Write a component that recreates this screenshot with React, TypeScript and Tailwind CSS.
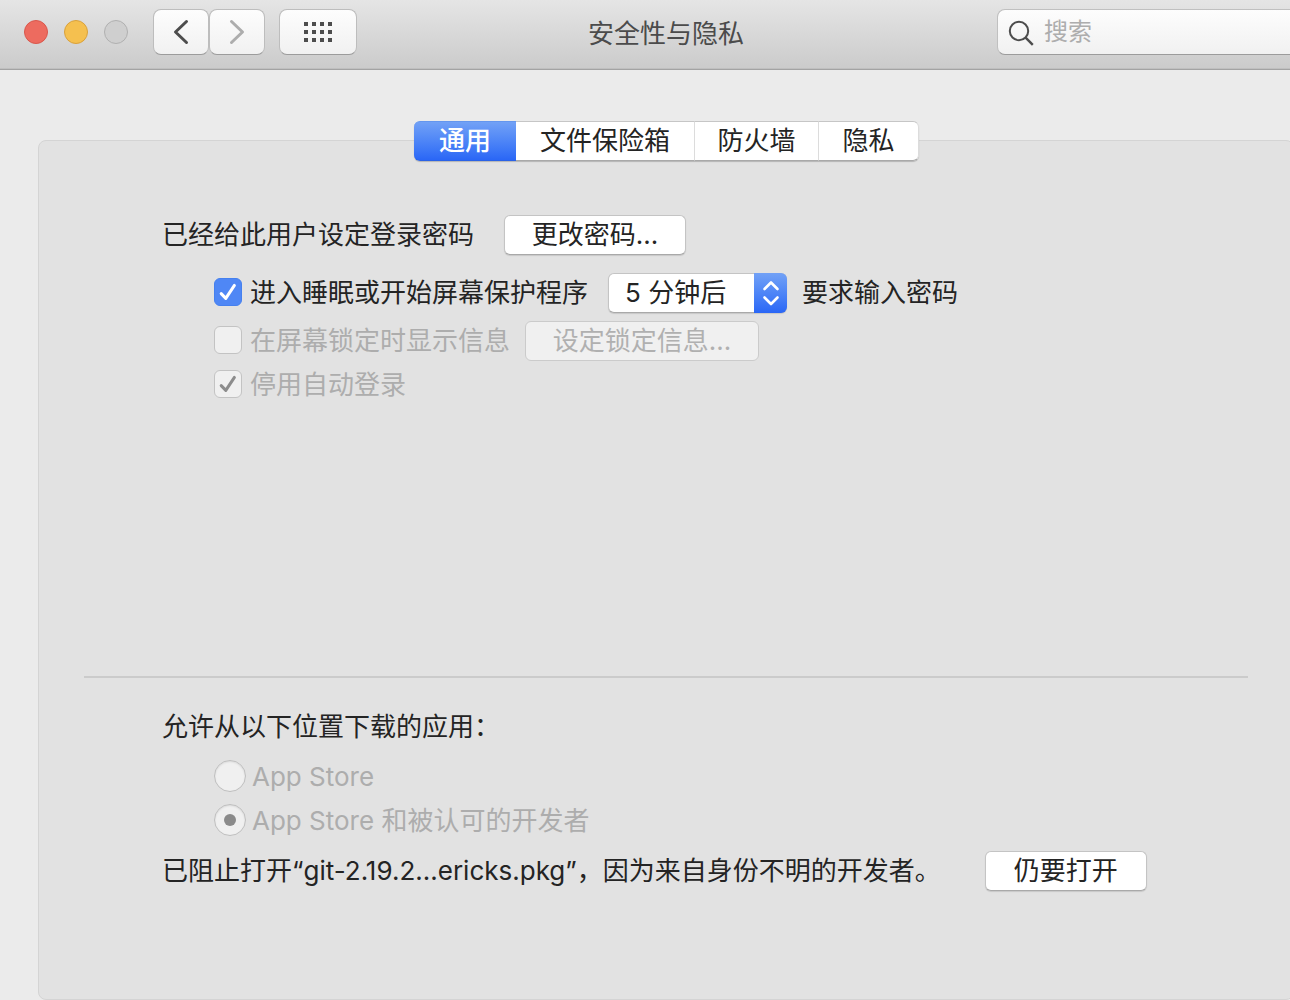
import React, { useState } from "react";

const buttonBase =
    "h-10 rounded-md border bg-white border-[#c4c4c4] border-b-[#a9a9a9] shadow-[0_1px_1px_rgba(0,0,0,0.12)] text-center leading-[38px] disabled:bg-[#f0f0f0] disabled:border-[#cbcbcb] disabled:text-[#b0b0b0] disabled:shadow-none";

const toolButton =
    "flex h-[46px] items-center justify-center rounded-lg border border-[#bdbdbd] border-b-[#9c9c9c] bg-linear-to-b from-[#fdfdfd] to-[#f1f1f1]";

const tabs = [
    { name: "通用", width: "w-[102px]" },
    { name: "文件保险箱", width: "w-[179px]" },
    { name: "防火墙", width: "w-[124px]" },
    { name: "隐私", width: "w-[100px]" },
];

interface CheckboxProps {
    id: string;
    checked: boolean;
    disabled?: boolean;
    onChange?: () => void;
}

const Checkbox: React.FC<CheckboxProps> = ({ id, checked, disabled, onChange }) => (
    <span className="mb-[2px] grid size-7 shrink-0">
        <input
            id={id}
            type="checkbox"
            checked={checked}
            disabled={disabled}
            onChange={onChange}
            className="col-start-1 row-start-1 size-7 appearance-none rounded-md border border-[#bcbcbc] bg-white checked:border-[#4580ef] checked:bg-[#4f87f5] disabled:border-[#c3c3c3] disabled:bg-[#f0f0f0]"
        />
        {checked && (
            <svg
                viewBox="0 0 28 28"
                fill="none"
                strokeLinecap="round"
                strokeLinejoin="round"
                className={`pointer-events-none col-start-1 row-start-1 size-7 ${disabled ? "stroke-[#8c8c8c]" : "stroke-white"}`}
            >
                <path d="M7.2 15.6 11.8 20.4 20.4 7.4" strokeWidth="3" />
            </svg>
        )}
    </span>
);

interface RadioProps {
    id: string;
    label: string;
    checked?: boolean;
}

const Radio: React.FC<RadioProps> = ({ id, label, checked }) => (
    <div className="flex h-11 items-center gap-[6px] text-[#adadad]">
        <span className="grid size-8 shrink-0 place-items-center">
            <input
                id={id}
                type="radio"
                name="source"
                defaultChecked={checked}
                disabled
                className="col-start-1 row-start-1 size-8 appearance-none rounded-full border border-[#bfbfbf] bg-[#f0f0f0] shadow-[inset_0_1px_2px_rgba(0,0,0,0.1)]"
            />
            {checked && <span className="col-start-1 row-start-1 size-3 rounded-full bg-[#8b8b8b]" />}
        </span>
        <label htmlFor={id} className="pt-[2px]">{label}</label>
    </div>
);

const Toolbar: React.FC = () => (
    <header className="grid h-[70px] grid-cols-[1fr_auto_1fr] items-start border-b border-[#a3a3a3] bg-linear-to-b from-[#e5e5e5] to-[#cbcbcb] px-6 pt-[9px] shadow-[inset_0_-1px_0_#bfbfbf]">
        <div className="flex items-center">
            <div className="flex gap-4">
                <button aria-label="关闭" className="size-6 rounded-full border border-[#d9574c] bg-[#ed6b5f]" />
                <button aria-label="最小化" className="size-6 rounded-full border border-[#d9a13c] bg-[#f5c04f]" />
                <button aria-label="缩放" disabled className="size-6 rounded-full border border-[#b0b0b0] bg-[#cfcfcf]" />
            </div>
            <button aria-label="后退" className={`${toolButton} ml-[25px] w-14`}>
                <svg viewBox="0 0 16 26" className="h-[26px] w-4" fill="none" stroke="#4d4d4d" strokeWidth="3" strokeLinecap="round" strokeLinejoin="round">
                    <path d="M13.5 2.5 2.5 13l11 10.5" />
                </svg>
            </button>
            <button aria-label="前进" disabled className={`${toolButton} w-14`}>
                <svg viewBox="0 0 16 26" className="h-[26px] w-4" fill="none" stroke="#adadad" strokeWidth="3" strokeLinecap="round" strokeLinejoin="round">
                    <path d="M2.5 2.5 13.5 13l-11 10.5" />
                </svg>
            </button>
            <button aria-label="显示全部" className={`${toolButton} ml-[14px] w-[78px]`}>
                <svg viewBox="0 0 28 20" className="h-5 w-7" fill="#4d4d4d">
                    {[0, 8, 16].map((y) =>
                        [0, 8, 16, 24].map((x) => <rect key={`${x}-${y}`} x={x} y={y} width="4" height="4" />)
                    )}
                </svg>
            </button>
        </div>
        <h1 className="leading-[50px] text-[#4b4b4b]">安全性与隐私</h1>
        <label className="-mr-2 flex h-[46px] w-[319px] items-center justify-self-end rounded-lg border border-[#c0c0c0] border-b-[#9c9c9c] bg-linear-to-b from-[#fdfdfd] to-[#f1f1f1] pl-[10px]">
            <svg viewBox="0 0 26 26" className="mt-[2px] size-[26px] shrink-0" fill="none" stroke="#4d4d4d" strokeWidth="2">
                <circle cx="11" cy="11" r="9.2" />
                <path d="m17.6 17.6 7.2 7.2" strokeWidth="2.4" />
            </svg>
            <input
                type="search"
                aria-label="搜索"
                placeholder="搜索"
                className="ml-[10px] w-full bg-transparent text-2xl outline-none placeholder:text-[#adadad]"
            />
        </label>
    </header>
);

const App: React.FC = () => {
    const [activeTab, setActiveTab] = useState("通用");
    const [requirePassword, setRequirePassword] = useState(true);

    return (
        <div className="overflow-hidden bg-[#ebebeb] font-[Inter,'Noto_Sans_CJK_SC',sans-serif] text-[26px] leading-10 text-[#242424]">
            {/* the window runs on past the right edge of the screen */}
            <div className="-mr-[42px] flex min-h-screen flex-col">
                <Toolbar />

                <main className="mx-[38px] mt-[51px] flex flex-1 flex-col">
                    <nav className="z-10 -mb-[21px] ml-px flex self-center rounded-md shadow-[0_1px_1px_rgba(0,0,0,0.2)]">
                        {tabs.map((tab) => (
                            <button
                                key={tab.name}
                                onClick={() => setActiveTab(tab.name)}
                                className={`${tab.width} h-10 border-y text-center leading-[38px] first:rounded-l-md last:rounded-r-md ${
                                    activeTab === tab.name
                                        ? "border-t-[#6496ee] border-b-[#2a62e6] bg-linear-to-b from-[#72a1f6] to-[#2a66f6] font-medium text-white"
                                        : "border-r border-t-[#c6c6c6] border-r-[#dcdcdc] border-b-[#a9a9a9] bg-white"
                                }`}
                            >
                                {tab.name}
                            </button>
                        ))}
                    </nav>

                    <div className="flex flex-1 flex-col rounded-lg border border-[#d4d4d4] bg-[#e2e2e2] pt-[74px] pb-[108px]">
                        <section className="pl-[123px]">
                            <div className="flex items-center">
                                <span>已经给此用户设定登录密码</span>
                                <button className={`${buttonBase} ml-[30px] w-[182px]`}>更改密码...</button>
                            </div>

                            <div className="mt-[18px] ml-[52px] flex items-center">
                                <Checkbox id="require" checked={requirePassword} onChange={() => setRequirePassword(!requirePassword)} />
                                <label htmlFor="require" className="ml-2">进入睡眠或开始屏幕保护程序</label>
                                <div className="ml-5 grid w-[179px]">
                                    <select
                                        aria-label="要求输入密码的时间"
                                        className={`${buttonBase} col-start-1 row-start-1 w-full appearance-none pl-4 text-left!`}
                                    >
                                        <option>5 分钟后</option>
                                    </select>
                                    <span className="pointer-events-none col-start-1 row-start-1 flex h-10 w-[33px] items-center justify-center justify-self-end rounded-r-md bg-linear-to-b from-[#72a1f6] to-[#2a66f6]">
                                        <svg viewBox="0 0 18 28" className="h-7 w-[18px]" fill="none" stroke="white" strokeWidth="2.6" strokeLinecap="round" strokeLinejoin="round">
                                            <path d="M2.5 10 9 3.5l6.5 6.5M2.5 18.5 9 25l6.5-6.5" />
                                        </svg>
                                    </span>
                                </div>
                                <span className="ml-[15px]">要求输入密码</span>
                            </div>

                            <div className="mt-2 ml-[52px] flex items-center text-[#adadad]">
                                <Checkbox id="message" checked={false} disabled />
                                <label htmlFor="message" className="ml-2">在屏幕锁定时显示信息</label>
                                <button disabled className={`${buttonBase} ml-[15px] w-[234px]`}>设定锁定信息...</button>
                            </div>

                            <div className="mt-1 ml-[52px] flex items-center text-[#adadad]">
                                <Checkbox id="autologin" checked disabled />
                                <label htmlFor="autologin" className="ml-2">停用自动登录</label>
                            </div>
                        </section>

                        <hr className="mx-[45px] mt-auto border-t-2 border-[#cbcbcb]" />

                        <section className="pt-[29px] pl-[123px]">
                            <h2>允许从以下位置下载的应用：</h2>
                            <div className="mt-[7px] ml-[52px]">
                                <Radio id="store" label="App Store" />
                                <Radio id="developers" label="App Store 和被认可的开发者" checked />
                            </div>
                            <div className="mt-[9px] flex items-center">
                                <span>已阻止打开“git-2.19.2...ericks.pkg”，因为来自身份不明的开发者。</span>
                                <button className={`${buttonBase} ml-11 w-[162px]`}>仍要打开</button>
                            </div>
                        </section>
                    </div>
                </main>
            </div>
        </div>
    );
};

export default App;
